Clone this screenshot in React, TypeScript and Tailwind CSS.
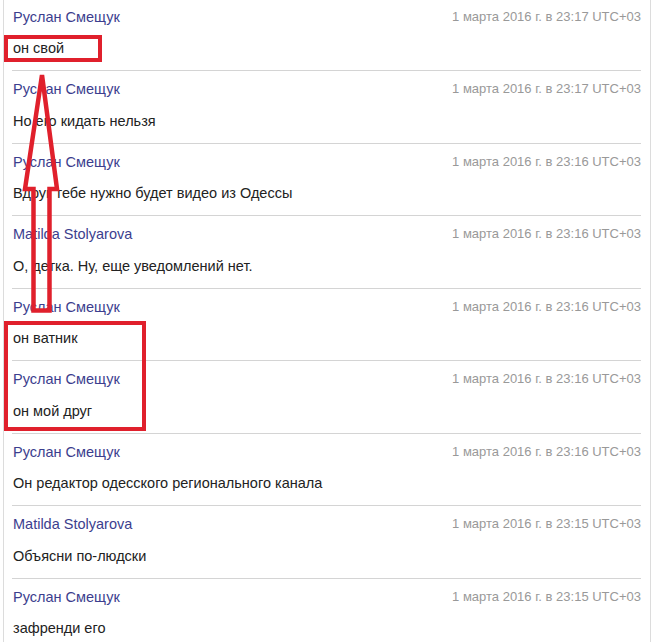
const messages = [
  { name: 'Руслан Смещук', date: '1 марта 2016 г. в 23:17 UTC+03', text: 'он свой' },
  { name: 'Руслан Смещук', date: '1 марта 2016 г. в 23:17 UTC+03', text: 'Но его кидать нельзя' },
  { name: 'Руслан Смещук', date: '1 марта 2016 г. в 23:16 UTC+03', text: 'Вдруг тебе нужно будет видео из Одессы' },
  { name: 'Matilda Stolyarova', date: '1 марта 2016 г. в 23:16 UTC+03', text: 'О, детка. Ну, еще уведомлений нет.' },
  { name: 'Руслан Смещук', date: '1 марта 2016 г. в 23:16 UTC+03', text: 'он ватник' },
  { name: 'Руслан Смещук', date: '1 марта 2016 г. в 23:16 UTC+03', text: 'он мой друг' },
  { name: 'Руслан Смещук', date: '1 марта 2016 г. в 23:16 UTC+03', text: 'Он редактор одесского регионального канала' },
  { name: 'Matilda Stolyarova', date: '1 марта 2016 г. в 23:15 UTC+03', text: 'Объясни по-людски' },
  { name: 'Руслан Смещук', date: '1 марта 2016 г. в 23:15 UTC+03', text: 'зафренди его' },
]

export default function App() {
  return (
    <div className="relative w-[653px] h-[643px] overflow-hidden bg-white font-['Liberation_Sans',Arial,sans-serif] text-[14.5px]">
      <div className="ml-[3px] w-[648px] h-full border-l border-r border-[#dcdcdc]">
        <div className="mt-[-1.5px] ml-[8px] mr-[9px]">
          {messages.map((m, i) => (
            <div key={i} className="pt-[8px] pb-[12px] border-b border-[#d4d4d4]">
              <div className="flex justify-between items-center h-[20px] leading-[20px] pl-[1px]">
                <span className="text-[#3c3e8e]">{m.name}</span>
                <span className="text-[13px] text-[#999999]">{m.date}</span>
              </div>
              <div className="mt-[11.5px] h-[20px] leading-[20px] pl-[1px] text-[#222222]">{m.text}</div>
            </div>
          ))}
        </div>
      </div>

      {/* red annotations */}
      <div className="absolute left-[4px] top-[35px] w-[98px] h-[27px] border-[4px] border-[#e0202c]" />
      <div className="absolute left-[4px] top-[321px] w-[142px] h-[110px] border-[4px] border-[#e0202c]" />
      <svg className="absolute left-0 top-0" width="653" height="643">
        <polygon
          points="42,75 57,189 49.5,189 49.5,310.5 33.5,310.5 33.5,189 25,189"
          fill="none"
          stroke="#e0202c"
          strokeWidth="4.5"
          strokeLinejoin="miter"
        />
      </svg>
    </div>
  )
}
